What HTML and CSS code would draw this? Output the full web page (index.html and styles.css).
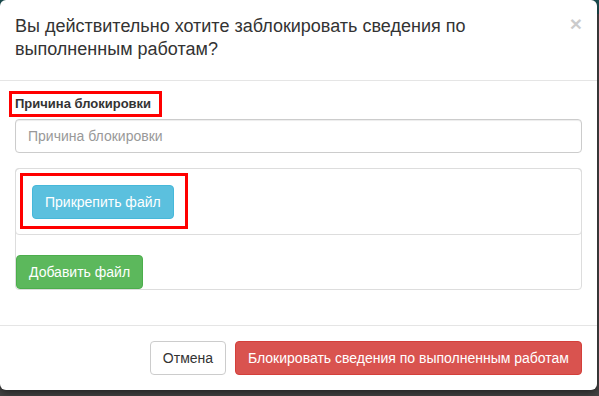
FILE: index.html
```html
<!DOCTYPE html>
<html lang="ru">
<head>
  <meta charset="UTF-8" />
  <title>Блокировка сведений</title>
  <link rel="stylesheet" href="styles.css">
</head>
<body>

  <div class="modal">
    <div class="modal-header">
      <button class="close" type="button">&times;</button>
      <h4 class="modal-title">Вы действительно хотите заблокировать сведения по выполненным работам?</h4>
    </div>

    <div class="modal-body">
      <div class="form-group">
        <label class="marked" for="reason">Причина блокировки</label>
        <input class="form-control" id="reason" type="text" placeholder="Причина блокировки">
      </div>

      <div class="files">
        <div class="file-row">
          <div class="mark-box">
            <button class="btn btn-info" type="button">Прикрепить файл</button>
          </div>
        </div>
        <button class="btn btn-success btn-add" type="button">Добавить файл</button>
      </div>
    </div>

    <div class="modal-footer">
      <button class="btn btn-default" type="button">Отмена</button>
      <button class="btn btn-danger" type="button">Блокировать сведения по выполненным работам</button>
    </div>
  </div>

</body>
</html>
```

FILE: styles.css
```css
body {
  margin: 0;
  font-family: "Liberation Sans", Arial, sans-serif;
  font-size: 14px;
  line-height: 20px;
  color: #333;
  background: linear-gradient(180deg, #1b4e51 0, #1b4e51 14px, #454545 14px);
  height: 100vh;
}

.modal {
  width: 597px;
  background: #fff;
  border-radius: 6px;
  box-shadow: 0 3px 9px rgba(0,0,0,0.5);
}

.modal-header {
  padding: 15px 15px 19px;
  border-bottom: 1px solid #e5e5e5;
}

.modal-title {
  margin: 0;
  font-size: 18px;
  font-weight: normal;
  line-height: 23px;
}

.close {
  float: right;
  margin-top: -2px;
  padding: 0;
  background: none;
  border: 0;
  font-family: inherit;
  font-size: 21px;
  font-weight: bold;
  line-height: 1;
  color: #000;
  opacity: 0.2;
}

.modal-body {
  padding: 13px 15px 15px;
}

.form-group {
  margin-bottom: 15px;
}

label.marked {
  display: block;
  width: fit-content;
  margin: 0 0 5px -3px;
  padding: 0 8px 0 3px;
  font-size: 13px;
  font-weight: bold;
  outline: 3px solid #f00;
}

.form-control {
  display: block;
  width: 100%;
  height: 34px;
  box-sizing: border-box;
  padding: 6px 12px;
  font-family: inherit;
  font-size: 14px;
  color: #555;
  border: 1px solid #ccc;
  border-radius: 4px;
  box-shadow: inset 0 1px 1px rgba(0,0,0,0.075);
}

.form-control::placeholder {
  color: #999;
}

.files {
  border: 1px solid #ddd;
  border-radius: 4px;
  margin-bottom: 20px;
}

.file-row {
  display: flex;
  align-items: flex-start;
  margin: -1px -1px 0;
  padding: 4px 4px 5px;
  border: 1px solid #ddd;
  border-radius: 4px;
}

.mark-box {
  border: 3px solid #f00;
  padding: 9px 11px 7px 9px;
}

.btn {
  display: inline-block;
  padding: 6px 12px;
  font-family: inherit;
  font-size: 14px;
  line-height: 20px;
  border: 1px solid transparent;
  border-radius: 4px;
  color: #fff;
  white-space: nowrap;
}

.mark-box .btn,
.btn-add {
  display: block;
}

.btn-add {
  margin-top: 20px;
}

.btn-info {
  background: #5bc0de;
  border-color: #46b8da;
}

.btn-success {
  background: #5cb85c;
  border-color: #4cae4c;
}

.btn-danger {
  background: #d9534f;
  border-color: #d43f3a;
}

.btn-default {
  background: #fff;
  border-color: #ccc;
  color: #333;
}

.modal-footer {
  padding: 15px;
  text-align: right;
  border-top: 1px solid #e5e5e5;
}

.modal-footer .btn + .btn {
  margin-left: 5px;
}
```
